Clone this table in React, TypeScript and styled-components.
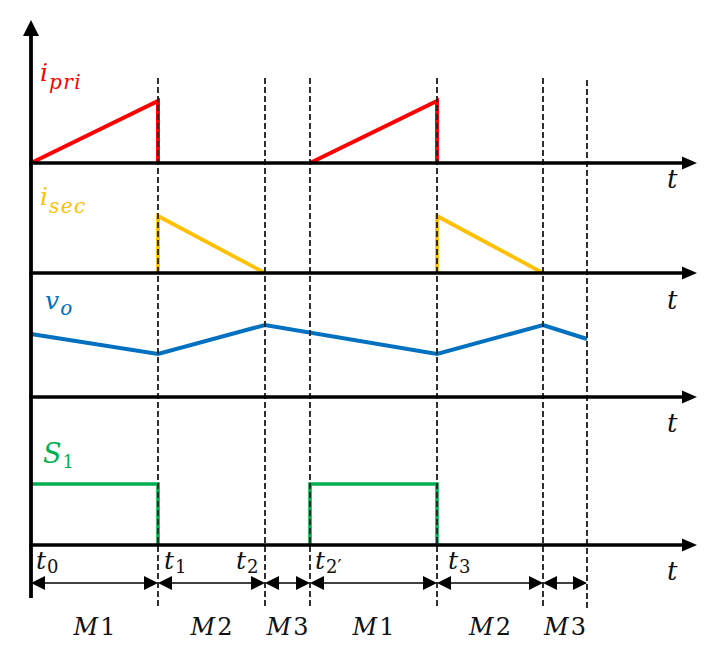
import React from "react";
import styled, { createGlobalStyle } from "styled-components";

const GlobalStyle = createGlobalStyle`
    html, body {
        margin: 0;
        padding: 0;
        background: #ffffff;
    }
`;

const Page = styled.div`
    width: 711px;
    height: 659px;
    display: flex;
    background: #ffffff;
    overflow: hidden;
`;

const Figure = styled.svg`
    display: block;
    width: 711px;
    height: 659px;
    font-family: "DejaVu Serif", "Liberation Serif", serif;
`;

const MathText = styled.text<{ $color?: string; $size?: number }>`
    font-size: ${(p) => p.$size ?? 25}px;
    font-style: italic;
    fill: ${(p) => p.$color ?? "#111111"};
`;

// subscripts: letters stay italic, digits are upright as in math typesetting
const Sub = styled.tspan<{ $upright?: boolean }>`
    font-size: ${(p) => (p.$upright ? 18 : 20)}px;
    font-style: ${(p) => (p.$upright ? "normal" : "italic")};
    letter-spacing: ${(p) => (p.$upright ? 0 : 1.4)}px;
`;

const Digit = styled.tspan`
    font-style: normal;
`;

const AXIS_X = 31;
const AXIS_END = 697;
const AXES = [163, 273, 397, 545];
const MARKS = [158, 265, 310, 437, 543, 587];

const RED = "#ff0000";
const YELLOW = "#ffc000";
const BLUE = "#0070c0";
const GREEN = "#00b050";

const traces: { color: string; width: number; points: string }[] = [
    { color: RED, width: 4, points: "31,163 158,101 158,163" },
    { color: RED, width: 4, points: "310,163 437,101 437,163" },
    { color: YELLOW, width: 3.8, points: "158,273 158,216 265,273" },
    { color: YELLOW, width: 3.8, points: "437,273 437,216 543,273" },
    {
        color: BLUE,
        width: 4,
        points: "31,334 158,354 265,325 437,354 543,325 587,339",
    },
    { color: GREEN, width: 3.6, points: "31,484 158,484 158,545" },
    { color: GREEN, width: 3.6, points: "310,545 310,484 437,484 437,545" },
];

// t labels on the right of each time axis
const tLabels = [188, 309, 432, 580];

// time instants under the bottom axis
const instants: { x: number; sub: string }[] = [
    { x: 36, sub: "0" },
    { x: 164, sub: "1" },
    { x: 236, sub: "2" },
    { x: 315, sub: "2\u2032" },
    { x: 448, sub: "3" },
];

// mode spans between the markers
const spans: { from: number; to: number; mode: string }[] = [
    { from: 31, to: 158, mode: "1" },
    { from: 158, to: 265, mode: "2" },
    { from: 265, to: 310, mode: "3" },
    { from: 310, to: 437, mode: "1" },
    { from: 437, to: 543, mode: "2" },
    { from: 543, to: 587, mode: "3" },
];

const SPAN_Y = 583;

function HorizontalAxis({ y }: { y: number }) {
    return (
        <g>
            <line
                x1={AXIS_X - 1.8}
                y1={y}
                x2={AXIS_END - 10}
                y2={y}
                stroke="#000"
                strokeWidth={3.6}
            />
            <polygon
                points={`${AXIS_END},${y} ${AXIS_END - 15},${y - 6.5} ${AXIS_END - 15},${y + 6.5}`}
                fill="#000"
            />
        </g>
    );
}

function SpanArrow({ from, to }: { from: number; to: number }) {
    const head = 14;
    const half = 7;
    return (
        <g>
            <line
                x1={from + 4}
                y1={SPAN_Y}
                x2={to - 4}
                y2={SPAN_Y}
                stroke="#000"
                strokeWidth={1.7}
            />
            <polygon
                points={`${from},${SPAN_Y} ${from + head},${SPAN_Y - half} ${from + head},${SPAN_Y + half}`}
                fill="#000"
            />
            <polygon
                points={`${to},${SPAN_Y} ${to - head},${SPAN_Y - half} ${to - head},${SPAN_Y + half}`}
                fill="#000"
            />
        </g>
    );
}

export default function App() {
    return (
        <Page>
            <GlobalStyle />
            <Figure viewBox="0 0 711 659">
                {/* waveforms */}
                {traces.map((t, i) => (
                    <polyline
                        key={i}
                        points={t.points}
                        fill="none"
                        stroke={t.color}
                        strokeWidth={t.width}
                        strokeLinejoin="miter"
                    />
                ))}

                {/* switching instants */}
                {MARKS.map((x, i) => (
                    <line
                        key={x}
                        x1={x}
                        y1={i === MARKS.length - 1 ? 80 : 78}
                        x2={x}
                        y2={i === MARKS.length - 1 ? 611 : 608}
                        stroke="#262626"
                        strokeWidth={1.9}
                        strokeDasharray="6 3"
                    />
                ))}

                {/* axes */}
                <line
                    x1={AXIS_X}
                    y1={32}
                    x2={AXIS_X}
                    y2={598}
                    stroke="#000"
                    strokeWidth={3.8}
                />
                <polygon points="31,20 23,36 39,36" fill="#000" />
                {AXES.map((y) => (
                    <HorizontalAxis key={y} y={y} />
                ))}

                {/* signal names */}
                <MathText x={40} y={81} $color={RED}>
                    i<Sub dx={1} dy={8}>pri</Sub>
                </MathText>
                <MathText x={40} y={205} $color={YELLOW}>
                    i<Sub dx={1} dy={8}>sec</Sub>
                </MathText>
                <MathText x={45} y={309} $color={BLUE}>
                    v<Sub dx={1} dy={6}>o</Sub>
                </MathText>
                <MathText x={43} y={463} $color={GREEN} $size={27}>
                    S<Sub $upright dx={1} dy={5}>1</Sub>
                </MathText>

                {tLabels.map((y) => (
                    <MathText key={y} x={667} y={y} $size={26}>
                        t
                    </MathText>
                ))}

                {instants.map((it) => (
                    <MathText key={it.x} x={it.x} y={569}>
                        t
                        <Sub $upright dx={1} dy={4}>
                            {it.sub}
                        </Sub>
                    </MathText>
                ))}

                {spans.map((s, i) => (
                    <SpanArrow key={i} from={s.from} to={s.to} />
                ))}
                {spans.map((s, i) => (
                    <MathText
                        key={`m${i}`}
                        x={(s.from + s.to) / 2}
                        y={635}
                        $size={24}
                        textAnchor="middle"
                    >
                        M<Digit dx={2}>{s.mode}</Digit>
                    </MathText>
                ))}
            </Figure>
        </Page>
    );
}
